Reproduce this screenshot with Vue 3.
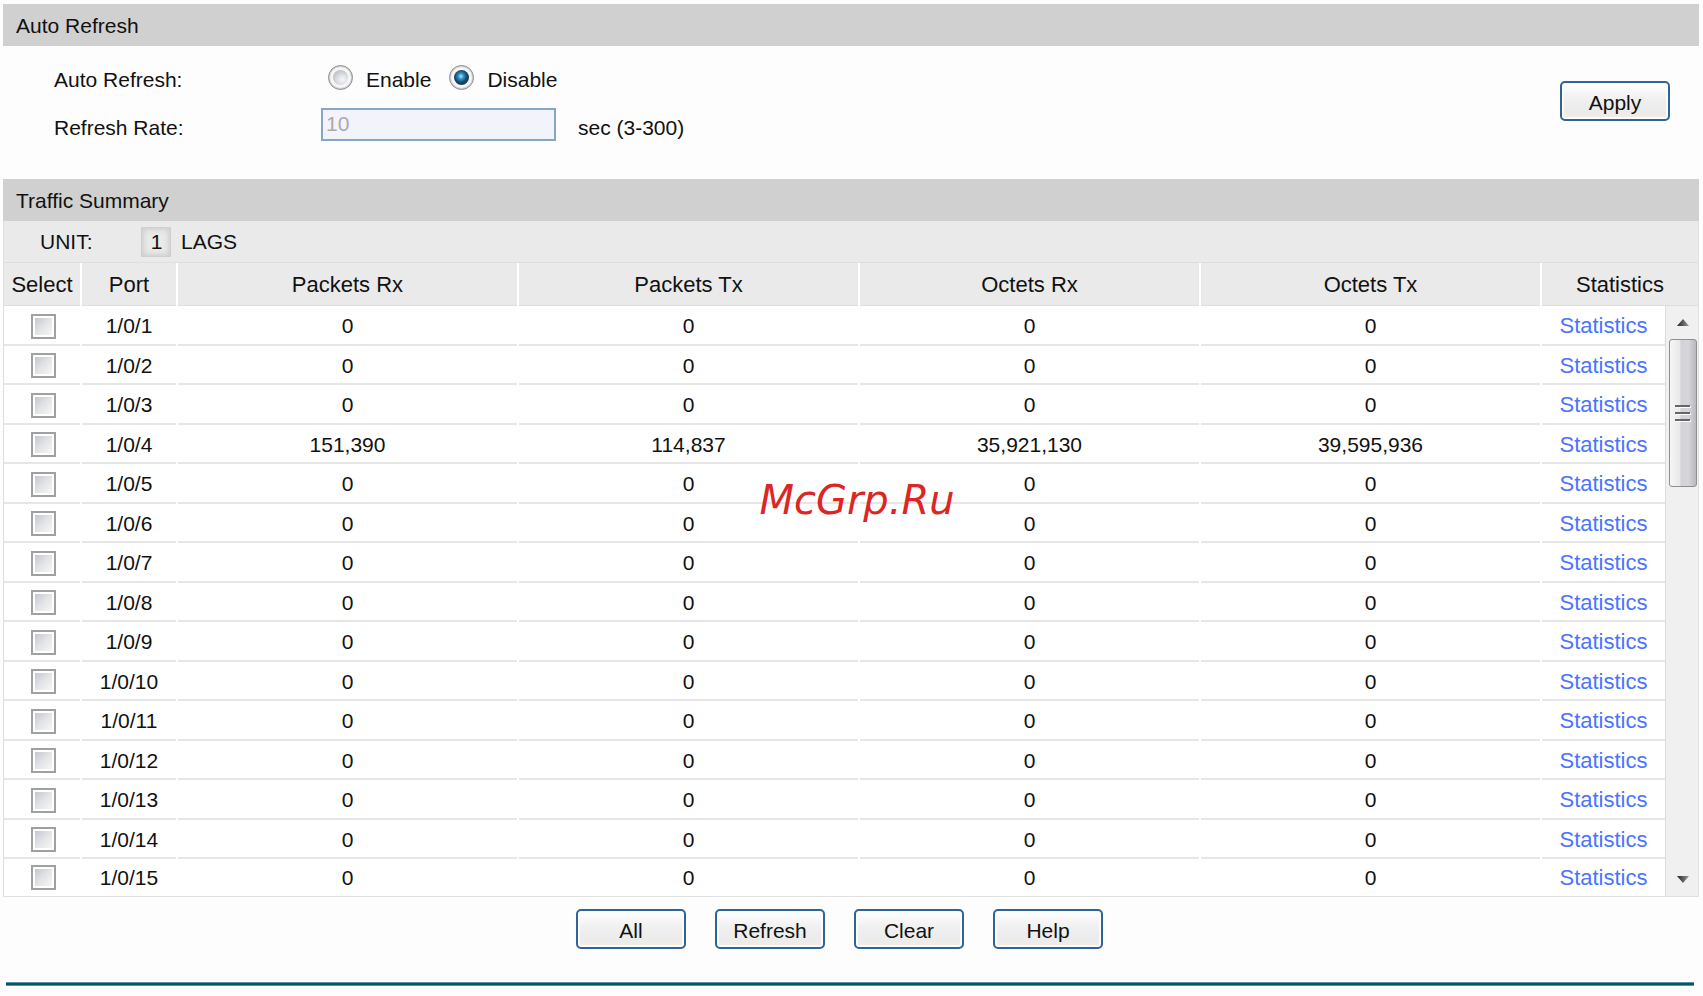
<template>
  <div class="page">
    <section>
      <h2 class="section-title">Auto Refresh</h2>
      <form class="refresh-form" @submit.prevent>
        <div class="fields">
          <div class="field-row" role="radiogroup" aria-labelledby="auto-label">
            <span id="auto-label" class="field-label">Auto Refresh:</span>
            <input id="auto-on" v-model="autoRefresh" type="radio" value="enable" class="radio" />
            <label for="auto-on" class="radio-label">Enable</label>
            <input id="auto-off" v-model="autoRefresh" type="radio" value="disable" class="radio" />
            <label for="auto-off" class="radio-label">Disable</label>
          </div>
          <div class="field-row">
            <label for="rate" class="field-label">Refresh Rate:</label>
            <input id="rate" v-model="rate" type="text" class="rate-input" :disabled="autoRefresh === 'disable'" />
            <span class="hint">sec (3-300)</span>
          </div>
        </div>
        <button type="submit" class="btn">Apply</button>
      </form>
    </section>

    <section>
      <h2 class="section-title">Traffic Summary</h2>
      <div class="summary">
        <div class="unit-bar">
          <span class="unit-label">UNIT:</span>
          <a href="#" class="unit-tab active">1</a>
          <a href="#" class="unit-tab">LAGS</a>
        </div>
        <table class="head-table">
          <thead>
            <tr>
              <th class="col-select">Select</th>
              <th class="col-port">Port</th>
              <th>Packets Rx</th>
              <th>Packets Tx</th>
              <th>Octets Rx</th>
              <th>Octets Tx</th>
              <th class="col-stats-head">Statistics</th>
            </tr>
          </thead>
        </table>
        <div class="body-wrap">
          <table class="body-table">
            <tbody>
              <tr v-for="row in rows" :key="row.port">
                <td class="col-select">
                  <input v-model="row.checked" type="checkbox" class="check" :aria-label="row.port" />
                </td>
                <td class="col-port">{{ row.port }}</td>
                <td>{{ row.packetsRx }}</td>
                <td>{{ row.packetsTx }}</td>
                <td>{{ row.octetsRx }}</td>
                <td>{{ row.octetsTx }}</td>
                <td class="col-stats"><a href="#">Statistics</a></td>
              </tr>
            </tbody>
          </table>
          <div class="scrollbar" aria-hidden="true">
            <div class="arrow-box">
              <svg width="12" height="7" viewBox="0 0 12 7">
                <defs>
                  <linearGradient id="arrow-fill" x1="0" x2="1">
                    <stop offset="0" stop-color="#222" />
                    <stop offset="1" stop-color="#999" />
                  </linearGradient>
                </defs>
                <path d="M6 0L12 7H0Z" fill="url(#arrow-fill)" />
              </svg>
            </div>
            <div class="thumb">
              <svg width="16" height="18" viewBox="0 0 16 18">
                <path d="M1 3H16M1 10H16M1 17H16" stroke="#fff" stroke-width="2" />
                <path d="M0 2H15M0 9H15M0 16H15" stroke="#666" stroke-width="2" />
              </svg>
            </div>
            <div class="arrow-box bottom">
              <svg width="12" height="7" viewBox="0 0 12 7">
                <path d="M0 0H12L6 7Z" fill="url(#arrow-fill)" />
              </svg>
            </div>
          </div>
          <span class="watermark">McGrp.Ru</span>
        </div>
      </div>
    </section>

    <div class="actions">
      <button v-for="name in actions" :key="name" type="button" class="btn">{{ name }}</button>
    </div>
    <hr class="divider" />
  </div>
</template>

<script setup>
import { ref } from 'vue'

const autoRefresh = ref('disable')
const rate = ref('10')
const actions = ['All', 'Refresh', 'Clear', 'Help']

const traffic = {
  4: ['151,390', '114,837', '35,921,130', '39,595,936']
}

const rows = ref(
  Array.from({ length: 15 }, (_, i) => {
    const [packetsRx, packetsTx, octetsRx, octetsTx] = traffic[i + 1] || ['0', '0', '0', '0']
    return { port: `1/0/${i + 1}`, packetsRx, packetsTx, octetsRx, octetsTx, checked: false }
  })
)
</script>

<style>
body {
  background: #fdfdfd;
}
</style>

<style scoped>
.page {
  padding: 4px 4px 0 3px;
  font-family: "Liberation Sans", Arial, sans-serif;
  font-size: 21px;
  line-height: 24px;
  color: #111;
}
.section-title {
  display: flex;
  align-items: center;
  box-sizing: border-box;
  height: 42px;
  margin: 0;
  padding: 2px 0 0 13px;
  background: #d0d0d0;
  font-size: 21px;
  font-weight: normal;
}
.refresh-form {
  display: flex;
  justify-content: space-between;
  align-items: center;
  padding: 10px 29px 27px 51px;
}
.refresh-form .btn {
  margin-bottom: 7px;
}
.field-row {
  display: flex;
  align-items: center;
  height: 48px;
}
.field-label {
  width: 267px;
}
.radio {
  appearance: none;
  box-sizing: border-box;
  width: 25px;
  height: 25px;
  margin: 0 13px 6px 7px;
  padding: 4px;
  border: 1px solid #8c8c8c;
  border-radius: 50%;
  background: #f6f6f6;
  box-shadow: inset 0 0 0 1px #cfcfcf;
}
.radio::before {
  content: "";
  display: block;
  width: 15px;
  height: 15px;
  border-radius: 50%;
  background: radial-gradient(circle at 62% 64%, #f6f7f8 0, #dcdfe3 5px, #bcc1c8 10px);
}
.radio:checked::before {
  background: radial-gradient(circle at 46% 42%, #a5e6fb 0, #2b8dbf 3px, #0e4a70 6px, #1b3a50 8px);
}
.radio-label {
  margin-right: 11px;
}
.rate-input {
  box-sizing: border-box;
  width: 235px;
  height: 33px;
  margin: 0 22px 8px 0;
  padding: 0 3px;
  border: 2px solid #86a6c6;
  border-radius: 0;
  background: #fff;
  font: inherit;
}
.rate-input:disabled {
  background: #f3f4fb;
  color: #aaa;
}
.btn {
  width: 110px;
  height: 40px;
  padding: 4px 0 0;
  border: 2px solid #2f6496;
  border-radius: 5px;
  background: linear-gradient(#fff, #f0f0f0 45%, #ebebeb 80%, #f1eee4);
  box-shadow: inset 0 0 0 2px #fbfbfb;
  font: inherit;
  color: #111;
}
.summary {
  border: 1px solid #e0e0e0;
  border-top: 0;
}
.unit-bar {
  display: flex;
  align-items: center;
  height: 41px;
  padding-left: 36px;
  border-bottom: 1px solid #dedede;
  background: #eaeaea;
}
.unit-label {
  width: 101px;
}
.unit-tab {
  margin-right: 10px;
  color: #111;
  text-decoration: none;
}
.unit-tab.active {
  box-sizing: border-box;
  width: 30px;
  height: 30px;
  padding-left: 1px;
  border: 1px solid #cfcfcf;
  box-shadow: inset 0 0 5px 2px #cfcfcf;
  line-height: 28px;
  text-align: center;
}
table {
  width: 100%;
  table-layout: fixed;
  border-collapse: separate;
  border-spacing: 0;
}
th,
td {
  padding: 0;
  border-right: 2px solid #fff;
  text-align: center;
}
th {
  height: 43px;
  background: #eaeaea;
  box-shadow: inset 0 -1px #dedede;
  font-size: 22px;
  font-weight: normal;
}
td {
  height: 39px;
  background: #fff;
  box-shadow: inset 0 -2px #e6e6e6;
}
tr:nth-child(odd) td {
  height: 40px;
}
tr:last-child td {
  height: 37px;
  box-shadow: none;
}
th:last-child,
td:last-child {
  border-right: 0;
}
.col-select {
  width: 76px;
}
.col-port {
  width: 94px;
}
.col-stats-head {
  width: 156px;
}
.col-stats {
  width: 123px;
}
.col-stats a {
  color: #4a74ff;
  font-size: 22px;
  text-decoration: none;
}
.body-wrap {
  display: flex;
  position: relative;
}
.body-table {
  flex: 1;
}
.check {
  appearance: none;
  display: block;
  box-sizing: border-box;
  width: 25px;
  height: 25px;
  margin: 0 0 0 27px;
  padding: 2px;
  border: 2px solid #a0a0a0;
  background: linear-gradient(135deg, #c3c7ce, #e3e4e7 50%, #f6f6f6) content-box #f6f6f6;
}
.check:checked {
  background-color: #9cb8d4;
}
.scrollbar {
  box-sizing: border-box;
  display: flex;
  flex-direction: column;
  width: 33px;
  padding: 0 1px 0 3px;
  border-left: 1px solid #dcdcdc;
  background: #f0f0f0;
}
.arrow-box {
  display: flex;
  justify-content: center;
  align-items: center;
  height: 33px;
}
.arrow-box.bottom {
  margin-top: auto;
}
.thumb {
  box-sizing: border-box;
  display: flex;
  justify-content: center;
  align-items: center;
  height: 148px;
  border: 1px solid #8e8e8e;
  border-radius: 3px;
  background: linear-gradient(to right, #f6f6f6, #e8e8ea 38%, #d3d3d7 42%, #d6d6da 70%, #b8b8be);
}
.watermark {
  position: absolute;
  top: 170px;
  left: 0;
  right: 0;
  padding-left: 12px;
  color: #dc2626;
  font: italic 40px/48px "DejaVu Sans", sans-serif;
  text-align: center;
  pointer-events: none;
}
.actions {
  display: flex;
  justify-content: center;
  gap: 29px;
  padding: 12px 23px 0 0;
}
.divider {
  height: 2px;
  margin: 33px 5px 0 3px;
  border: 1px solid #5c929d;
  border-width: 1px 0;
  background: #00566a;
}
</style>
